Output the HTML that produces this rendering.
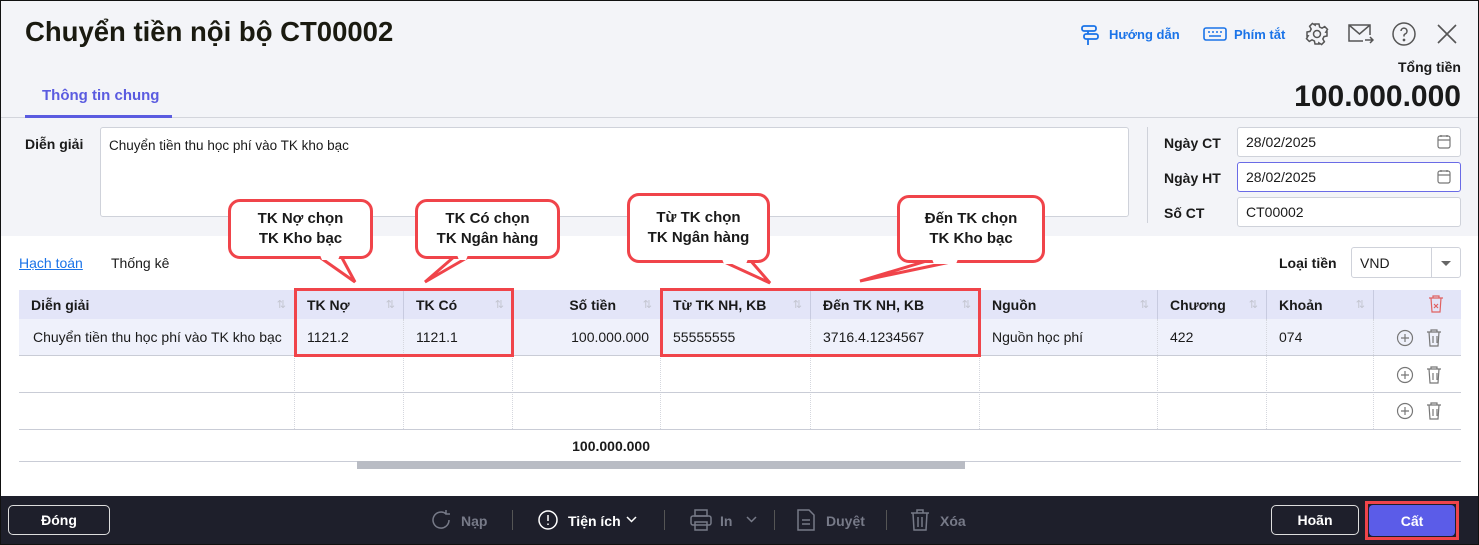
<!DOCTYPE html>
<html><head><meta charset="utf-8"><style>
*{box-sizing:border-box;margin:0;padding:0}
body{width:1479px;height:545px;overflow:hidden;font-family:"Liberation Sans",sans-serif;background:#fff;position:relative;color:#1a1a1a}
.a{position:absolute}
.top{left:0;top:0;width:1479px;height:236px;background:#f3f4f8}
.b{font-weight:bold}
.inp{background:#fff;border:1px solid #cfd2da;border-radius:3px;font-size:14px;padding:0 0 0 8px;display:flex;align-items:center}
.th{position:absolute;top:290px;height:29px;background:#e3e5f8;font-size:14px;font-weight:bold;display:flex;align-items:center;padding-left:12px;border-right:1px solid #c8cbe0}
.td{position:absolute;font-size:14px;display:flex;align-items:center;padding-left:12px;border-right:1px dotted #d5d7de}
.sort{position:absolute;right:8px;top:8px;color:#c3c5d0;font-size:11px;font-weight:normal}
.hl{position:absolute;left:19px;width:1442px;height:1px;background:#c9ccd6}
.call{position:absolute;border:3px solid #f0444a;border-radius:12px;background:#fff;font-size:15px;font-weight:bold;text-align:center;line-height:20px;display:flex;align-items:center;justify-content:center}
.foot{left:0;top:496px;width:1479px;height:49px;background:#1e1f2b}
.fb{position:absolute;color:#777a88;font-size:14px;font-weight:bold}
</style></head><body>
<div class="a top"></div>
<div class="a b" style="left:25px;top:16px;font-size:27.5px;color:#1a1a10">Chuyển tiền nội bộ CT00002</div>
<div class="a b" style="left:42px;top:87px;font-size:15px;color:#5a5be0">Thông tin chung</div>
<div class="a" style="left:0;top:117px;width:1479px;height:1px;background:#d3d5dc"></div>
<div class="a" style="left:25px;top:115px;width:147px;height:3px;background:#5a5be0"></div>
<svg class="a" style="left:1080px;top:24px" width="20" height="22" viewBox="0 0 20 22" fill="none" stroke="#1a73e8" stroke-width="1.8"><rect x="2" y="2" width="14" height="5" rx="2"/><rect x="4" y="10" width="14" height="5" rx="2"/><path d="M8 7v3M8 15v6"/></svg>
<div class="a b" style="left:1109px;top:27px;font-size:13px;color:#1a73e8">Hướng dẫn</div>
<svg class="a" style="left:1203px;top:27px" width="24" height="14" viewBox="0 0 24 14" fill="none" stroke="#1a73e8" stroke-width="1.6"><rect x="1" y="1" width="22" height="12" rx="2"/><path d="M5 5h2M9 5h2M13 5h2M17 5h2M6 9h12"/></svg>
<div class="a b" style="left:1234px;top:27px;font-size:13px;color:#1a73e8">Phím tắt</div>
<svg class="a" style="left:1305px;top:22px" width="24" height="24" viewBox="0 0 24 24" fill="none" stroke="#555" stroke-width="1.5"><circle cx="12" cy="12" r="3.5"/><path d="M10 2h4l.6 3 2.4 1.2 2.7-1.6 2.8 2.8-1.6 2.7L22 10v4l-3 .6-1.2 2.4 1.6 2.7-2.8 2.8-2.7-1.6L14 22h-4l-.6-3-2.4-1.2-2.7 1.6-2.8-2.8 1.6-2.7L2 14v-4l3-.6 1.2-2.4-1.6-2.7 2.8-2.8 2.7 1.6z"/></svg>
<svg class="a" style="left:1348px;top:23px" width="26" height="22" viewBox="0 0 26 22" fill="none" stroke="#555" stroke-width="1.5"><path d="M22 12V2H1v16h14M1 2l10.5 9L22 2M17 17h8M22 14l3 3-3 3"/></svg>
<svg class="a" style="left:1392px;top:22px" width="24" height="24" viewBox="0 0 24 24" fill="none" stroke="#555" stroke-width="1.5"><circle cx="12" cy="12" r="11"/><path d="M9 9a3 3 0 1 1 4 3c-1 .5-1 1-1 2.5"/><circle cx="12" cy="18" r=".6" fill="#555"/></svg>
<svg class="a" style="left:1437px;top:24px" width="20" height="20" viewBox="0 0 20 20" stroke="#555" stroke-width="1.6"><path d="M1 1l18 18M19 1L1 19"/></svg>
<div class="a b" style="right:18px;top:59px;font-size:14px">Tổng tiền</div>
<div class="a b" style="right:18px;top:80px;font-size:30px">100.000.000</div>

<div class="a b" style="left:25px;top:136px;font-size:14px">Diễn giải</div>
<div class="a inp" style="left:100px;top:127px;width:1029px;height:90px;align-items:flex-start;padding-top:10px;font-size:13.5px">Chuyển tiền thu học phí vào TK kho bạc</div>
<div class="a" style="left:1147px;top:127px;width:1px;height:96px;background:#cfd2da"></div>
<div class="a b" style="left:1164px;top:135px;font-size:14px">Ngày CT</div>
<div class="a b" style="left:1164px;top:170px;font-size:14px">Ngày HT</div>
<div class="a b" style="left:1164px;top:205px;font-size:14px">Số CT</div>
<div class="a inp" style="left:1237px;top:127px;width:224px;height:30px">28/02/2025</div>
<div class="a inp" style="left:1237px;top:162px;width:224px;height:30px;border-color:#6a6be6">28/02/2025</div>
<div class="a inp" style="left:1237px;top:197px;width:224px;height:30px">CT00002</div>
<svg class="a" style="left:1437px;top:134px" width="14" height="15" viewBox="0 0 14 15" fill="none" stroke="#777" stroke-width="1.2"><rect x="1" y="2" width="12" height="12" rx="2"/><path d="M1 6h12M4 1v2M10 1v2"/></svg>
<svg class="a" style="left:1437px;top:169px" width="14" height="15" viewBox="0 0 14 15" fill="none" stroke="#777" stroke-width="1.2"><rect x="1" y="2" width="12" height="12" rx="2"/><path d="M1 6h12M4 1v2M10 1v2"/></svg>

<div class="a" style="left:19px;top:255px;font-size:14px;color:#1a73e8;text-decoration:underline">Hạch toán</div>
<div class="a" style="left:111px;top:255px;font-size:14px">Thống kê</div>
<div class="a b" style="left:1279px;top:255px;font-size:14px">Loại tiền</div>
<div class="a inp" style="left:1351px;top:247px;width:110px;height:31px;padding-left:8px">VND</div>
<div class="a" style="left:1431px;top:248px;width:1px;height:29px;background:#cfd2da"></div>
<div class="a" style="left:1441px;top:261px;border-left:5px solid transparent;border-right:5px solid transparent;border-top:5px solid #666"></div>

<div class="th" style="left:19px;width:276px">Diễn giải<span class="sort">⇅</span></div>
<div class="th" style="left:295px;width:109px">TK Nợ<span class="sort">⇅</span></div>
<div class="th" style="left:404px;width:109px">TK Có<span class="sort">⇅</span></div>
<div class="th" style="left:513px;width:148px;justify-content:flex-end;padding-right:44px">Số tiền<span class="sort">⇅</span></div>
<div class="th" style="left:661px;width:150px">Từ TK NH, KB<span class="sort">⇅</span></div>
<div class="th" style="left:811px;width:169px">Đến TK NH, KB<span class="sort">⇅</span></div>
<div class="th" style="left:980px;width:178px">Nguồn<span class="sort">⇅</span></div>
<div class="th" style="left:1158px;width:109px">Chương<span class="sort">⇅</span></div>
<div class="th" style="left:1267px;width:107px">Khoản<span class="sort">⇅</span></div>
<div class="th" style="left:1374px;width:87px;border-right:none"></div>
<svg class="a" style="left:1428px;top:295px" width="16" height="18" viewBox="0 0 16 18" fill="none" stroke="#e06060" stroke-width="1.2"><path d="M1 3h14M5 3V1h6v2M3 3l1 14h8l1-14M6 9l4 4M10 9l-4 4"/></svg>
<div class="a" style="left:19px;top:319px;width:1442px;height:36px;background:#eff1fb"></div>
<div class="td" style="left:19px;top:319px;width:276px;height:36px;padding-left:14px">Chuyển tiền thu học phí vào TK kho bạc</div>
<div class="td" style="left:295px;top:319px;width:109px;height:36px">1121.2</div>
<div class="td" style="left:404px;top:319px;width:109px;height:36px">1121.1</div>
<div class="td" style="left:513px;top:319px;width:148px;height:36px;justify-content:flex-end;padding-right:11px">100.000.000</div>
<div class="td" style="left:661px;top:319px;width:150px;height:36px">55555555</div>
<div class="td" style="left:811px;top:319px;width:169px;height:36px">3716.4.1234567</div>
<div class="td" style="left:980px;top:319px;width:178px;height:36px">Nguồn học phí</div>
<div class="td" style="left:1158px;top:319px;width:109px;height:36px">422</div>
<div class="td" style="left:1267px;top:319px;width:107px;height:36px">074</div>
<div class="td" style="left:19px;top:355px;width:276px;height:74px"></div>
<div class="td" style="left:295px;top:355px;width:109px;height:74px"></div>
<div class="td" style="left:404px;top:355px;width:109px;height:74px"></div>
<div class="td" style="left:513px;top:355px;width:148px;height:74px"></div>
<div class="td" style="left:661px;top:355px;width:150px;height:74px"></div>
<div class="td" style="left:811px;top:355px;width:169px;height:74px"></div>
<div class="td" style="left:980px;top:355px;width:178px;height:74px"></div>
<div class="td" style="left:1158px;top:355px;width:109px;height:74px"></div>
<div class="td" style="left:1267px;top:355px;width:107px;height:74px"></div>
<div class="hl" style="top:355px"></div>
<div class="hl" style="top:392px"></div>
<div class="hl" style="top:429px"></div>
<div class="hl" style="top:461px"></div>
<div class="a b" style="left:513px;top:438px;width:137px;text-align:right;font-size:14px">100.000.000</div>
<div class="a" style="left:357px;top:461px;width:608px;height:8px;background:#b9bcc4"></div>
<svg class="a" style="left:1396px;top:329px" width="46" height="18" viewBox="0 0 46 18" fill="none" stroke="#777" stroke-width="1.2"><circle cx="9" cy="9" r="7.5"/><path d="M9 5v8M5 9h8M31 3h14M35 3V1h6v2M33 3l1 14h8l1-14M37 7v7M41 7v7"/></svg>
<svg class="a" style="left:1396px;top:366px" width="46" height="18" viewBox="0 0 46 18" fill="none" stroke="#777" stroke-width="1.2"><circle cx="9" cy="9" r="7.5"/><path d="M9 5v8M5 9h8M31 3h14M35 3V1h6v2M33 3l1 14h8l1-14M37 7v7M41 7v7"/></svg>
<svg class="a" style="left:1396px;top:402px" width="46" height="18" viewBox="0 0 46 18" fill="none" stroke="#777" stroke-width="1.2"><circle cx="9" cy="9" r="7.5"/><path d="M9 5v8M5 9h8M31 3h14M35 3V1h6v2M33 3l1 14h8l1-14M37 7v7M41 7v7"/></svg>

<div class="a" style="left:294px;top:288px;width:220px;height:69px;border:3px solid #f0444a"></div>
<div class="a" style="left:660px;top:288px;width:321px;height:69px;border:3px solid #f0444a"></div>
<svg class="a" style="left:0;top:0" width="1479" height="300" fill="#fff" stroke="#f0444a" stroke-width="3"><path d="M318 256L355 282L341 256"/><path d="M455 256L425 282L470 256"/><path d="M720 260L770 283L750 260"/><path d="M930 260L860 281L960 260"/></svg>
<div class="call" style="left:228px;top:199px;width:145px;height:60px">TK Nợ chọn<br>TK Kho bạc</div>
<div class="call" style="left:415px;top:199px;width:145px;height:60px">TK Có chọn<br>TK Ngân hàng</div>
<div class="call" style="left:627px;top:193px;width:143px;height:70px">Từ TK chọn<br>TK Ngân hàng</div>
<div class="call" style="left:897px;top:195px;width:148px;height:68px">Đến TK chọn<br>TK Kho bạc</div>
<svg class="a" style="left:0;top:0" width="1479" height="300" fill="#fff" stroke="none"><path d="M320 255L340 255L338 260L322 260z"/><path d="M457 255L468 255L466 260L459 260z"/><path d="M722 259L748 259L746 264L724 264z"/><path d="M932 259L958 259L956 264L934 264z"/></svg>

<div class="a foot"></div>
<div class="a b" style="left:8px;top:505px;width:102px;height:30px;border:1px solid #ddd;border-radius:5px;color:#fff;font-size:14px;display:flex;align-items:center;justify-content:center">Đóng</div>
<svg class="a" style="left:430px;top:509px" width="22" height="22" viewBox="0 0 22 22" fill="none" stroke="#777a88" stroke-width="1.5"><path d="M19 11a8 8 0 1 1-3-6.2M16 1v4h4"/></svg>
<div class="fb" style="left:461px;top:513px">Nạp</div>
<div class="a" style="left:512px;top:510px;width:1px;height:20px;background:#555"></div>
<svg class="a" style="left:538px;top:510px" width="20" height="20" viewBox="0 0 20 20" fill="none" stroke="#fff" stroke-width="1.5"><circle cx="10" cy="10" r="9"/><path d="M10 5v6M10 13.5v1.5"/></svg>
<div class="fb" style="left:568px;top:513px;color:#fff">Tiện ích</div>
<svg class="a" style="left:626px;top:516px" width="11" height="7" viewBox="0 0 11 7" fill="none" stroke="#fff" stroke-width="1.5"><path d="M1 1l4.5 4.5L10 1"/></svg>
<div class="a" style="left:664px;top:510px;width:1px;height:20px;background:#555"></div>
<svg class="a" style="left:690px;top:509px" width="22" height="22" viewBox="0 0 22 22" fill="none" stroke="#777a88" stroke-width="1.5"><rect x="5" y="1" width="12" height="6"/><rect x="1" y="7" width="20" height="9" rx="2"/><rect x="5" y="13" width="12" height="8"/></svg>
<div class="fb" style="left:720px;top:513px">In</div>
<svg class="a" style="left:746px;top:516px" width="11" height="7" viewBox="0 0 11 7" fill="none" stroke="#777a88" stroke-width="1.5"><path d="M1 1l4.5 4.5L10 1"/></svg>
<div class="a" style="left:774px;top:510px;width:1px;height:20px;background:#555"></div>
<svg class="a" style="left:797px;top:509px" width="18" height="22" viewBox="0 0 18 22" fill="none" stroke="#777a88" stroke-width="1.5"><path d="M1 1h11l5 5v15H1zM5 11h8M5 15h8"/></svg>
<div class="fb" style="left:826px;top:513px">Duyệt</div>
<div class="a" style="left:886px;top:510px;width:1px;height:20px;background:#555"></div>
<svg class="a" style="left:910px;top:509px" width="20" height="22" viewBox="0 0 20 22" fill="none" stroke="#777a88" stroke-width="1.5"><path d="M1 4h18M7 4V1h6v3M3 4l1 17h12l1-17M8 8v10M12 8v10"/></svg>
<div class="fb" style="left:940px;top:513px">Xóa</div>
<div class="a b" style="left:1271px;top:505px;width:88px;height:30px;border:1px solid #ddd;border-radius:5px;color:#fff;font-size:14px;display:flex;align-items:center;justify-content:center">Hoãn</div>
<div class="a" style="left:1365px;top:501px;width:94px;height:39px;border:3px solid #f0444a"></div>
<div class="a b" style="left:1369px;top:505px;width:86px;height:31px;background:#5b5ce8;border-radius:4px;color:#fff;font-size:14px;display:flex;align-items:center;justify-content:center">Cất</div>
<div class="a" style="left:0;top:0;width:1479px;height:545px;border:1px solid #111;pointer-events:none"></div>
</body></html>
